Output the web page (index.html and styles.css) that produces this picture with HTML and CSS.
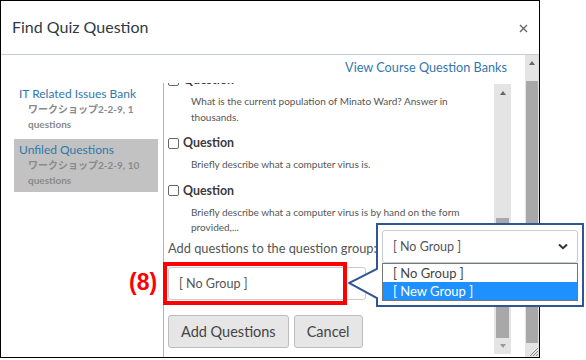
FILE: index.html
```html
<!DOCTYPE html>
<html lang="en">
<head>
    <meta charset="UTF-8">
    <meta name="viewport" content="width=device-width, initial-scale=1.0">
    <title>Find Quiz Question</title>
    <link rel="stylesheet" href="styles.css">
</head>
<body>
<div class="page">
    <div class="dialog">
        <div class="dialog-header">
            <h2 class="dialog-title">Find Quiz Question</h2>
            <button class="dialog-close" aria-label="Close">
                <svg width="9" height="9" viewBox="0 0 9 9"><path d="M1 1 L8 8 M8 1 L1 8" stroke="#666" stroke-width="1.4" fill="none"/></svg>
            </button>
        </div>

        <div class="dialog-body">
            <div class="dialog-main">
                <div class="bank-link-row">
                    <a href="#">View Course Question Banks</a>
                </div>

                <div class="finder">
                    <ul class="banks">
                        <li class="bank">
                            <a href="#" class="bank-name">IT Related Issues Bank</a>
                            <div class="bank-meta">ワークショップ2-2-9, 1 questions</div>
                        </li>
                        <li class="bank selected">
                            <a href="#" class="bank-name">Unfiled Questions</a>
                            <div class="bank-meta">ワークショップ2-2-9, 10 questions</div>
                        </li>
                    </ul>

                    <div class="questions-pane">
                        <div class="questions-scroll">
                            <div class="questions-list">
                                <div class="question">
                                    <label class="question-title"><span class="checkbox"></span>Question</label>
                                    <div class="question-text">What is the current population of Minato Ward? Answer in thousands.</div>
                                </div>
                                <div class="question">
                                    <label class="question-title"><span class="checkbox"></span>Question</label>
                                    <div class="question-text">Briefly describe what a computer virus is.</div>
                                </div>
                                <div class="question">
                                    <label class="question-title"><span class="checkbox"></span>Question</label>
                                    <div class="question-text">Briefly describe what a computer virus is by hand on the form provided,...</div>
                                </div>

                                <div class="group-label">Add questions to the question group:</div>
                                <div class="group-select">[ No Group ]</div>

                                <div class="actions">
                                    <button class="btn">Add Questions</button>
                                    <button class="btn">Cancel</button>
                                </div>
                            </div>
                        </div>

                        <div class="scrollbar inner-sb">
                            <div class="sb-button"><span class="arrow-up"></span></div>
                            <div class="sb-track"><div class="sb-thumb"></div></div>
                            <div class="sb-button bottom"><span class="arrow-down"></span></div>
                        </div>
                    </div>
                </div>
            </div>

            <div class="scrollbar outer-sb">
                <div class="sb-button tall"><span class="arrow-up"></span></div>
                <div class="sb-thumb"></div>
                <div class="sb-grip">
                    <svg width="12" height="12" viewBox="0 0 12 12"><path d="M11 3 L3 11 M11 6 L6 11 M11 9 L9 11" stroke="#8a8a8a" stroke-width="1" fill="none"/></svg>
                </div>
            </div>
        </div>
    </div>

    <!-- annotation -->
    <div class="step-label">(8)</div>
    <div class="highlight-box"></div>

    <div class="callout">
        <svg class="callout-frame" width="236" height="85" viewBox="0 0 236 85">
            <path d="M29 1 H235 V83 H29 V75 L1 60 L29 46 Z" fill="#fff" stroke="#2f5597" stroke-width="2"/>
        </svg>
        <div class="callout-body">
            <div class="select-box">
                <span>[ No Group ]</span>
                <svg width="10" height="7" viewBox="0 0 10 7"><path d="M1 1.5 L5 5.2 L9 1.5" stroke="#333" stroke-width="2" fill="none"/></svg>
            </div>
            <ul class="select-list">
                <li>[ No Group ]</li>
                <li class="active">[ New Group ]</li>
            </ul>
        </div>
    </div>
</div>
</body>
</html>
```

FILE: styles.css
```css
body {
    margin: 0;
    font-family: Lato, "Noto Sans CJK JP", sans-serif;
    background: #fff;
    color: #2d3b45;
}

.page {
    position: relative;
    width: 586px;
    height: 360px;
    overflow: hidden;
}

.dialog {
    width: 540px;
    height: 358px;
    box-sizing: border-box;
    border: 1px solid #000;
    display: flex;
    flex-direction: column;
}

.dialog-header {
    height: 54px;
    box-sizing: border-box;
    border-bottom: 1px solid #c7cdd1;
    display: flex;
    align-items: center;
    justify-content: space-between;
    padding: 0 11px 2px 11px;
}

.dialog-title {
    margin: 0;
    font-size: 16px;
    font-weight: normal;
    color: #2d3b45;
}

.dialog-close {
    border: none;
    background: none;
    padding: 0;
    margin-top: 4px;
    display: flex;
}

.dialog-body {
    flex: 1;
    display: flex;
    min-height: 0;
}

.dialog-main {
    flex: 1;
    display: flex;
    flex-direction: column;
}

.bank-link-row {
    height: 28px;
    line-height: 22px;
    text-align: right;
    padding-right: 18px;
}

.bank-link-row a {
    font-size: 12.7px;
    color: #3477ae;
    text-decoration: none;
}

.finder {
    flex: 1;
    display: flex;
    min-height: 0;
}

.banks {
    width: 162px;
    list-style: none;
    margin: 0;
    padding: 0;
}

.bank {
    height: 53px;
    box-sizing: border-box;
    margin: 0 5px 3px 13px;
    padding: 3px 0 4px 5px;
}

.bank.selected {
    background: #c2c2c2;
}

.bank-name {
    display: block;
    font-size: 12px;
    line-height: 16px;
    color: #2f78ad;
    text-decoration: none;
}

.bank-meta {
    margin-left: 9px;
    font-size: 10px;
    line-height: 15px;
    font-weight: bold;
    color: #8a8a8a;
}

.questions-pane {
    flex: 1;
    display: flex;
    border-left: 1px solid #b3b3b3;
    padding-right: 14px;
}

.questions-scroll {
    flex: 1;
    overflow: hidden;
    padding-left: 4px;
}

.questions-list {
    margin-top: -12px;
}

.question + .question {
    margin-top: 9px;
}

.question-title {
    display: flex;
    align-items: center;
    gap: 4px;
    font-size: 12.4px;
    line-height: 18px;
    font-weight: bold;
    color: #3b3b3b;
}

.checkbox {
    width: 9px;
    height: 9px;
    border: 1px solid #666;
    border-radius: 2px;
    background: #fff;
}

.question-text {
    width: 290px;
    margin: 5px 0 0 23px;
    font-size: 10px;
    line-height: 15.5px;
    color: #555;
}

.group-label {
    margin-top: 3px;
    font-size: 12.8px;
    line-height: 18px;
    color: #555;
}

.group-select {
    margin-top: 10px;
    width: 198px;
    height: 33px;
    box-sizing: border-box;
    border: 1px solid #c7cdd1;
    border-radius: 3px;
    padding-left: 10px;
    font-size: 12.6px;
    line-height: 31px;
    color: #555;
}

.actions {
    margin-top: 15px;
    display: flex;
    gap: 5px;
}

.btn {
    height: 33px;
    padding: 0 12px;
    font-family: Lato, sans-serif;
    font-size: 14.5px;
    color: #444;
    background: #e6e6e6;
    border: 1px solid #bdbdbd;
    border-radius: 3px;
}

/* scrollbars */
.scrollbar {
    background: #e4e4e4;
    display: flex;
    flex-direction: column;
}

.inner-sb {
    width: 17px;
    margin: 1px 0 3px;
}

.outer-sb {
    width: 14px;
}

.sb-button {
    height: 17px;
    display: flex;
    justify-content: center;
    align-items: center;
}

.sb-button.tall {
    height: 26px;
    align-items: flex-start;
    padding-top: 6px;
    box-sizing: border-box;
}

.sb-button.bottom {
    height: 16px;
}

.arrow-up {
    border-left: 3.5px solid transparent;
    border-right: 3.5px solid transparent;
    border-bottom: 4px solid #666;
}

.arrow-down {
    border-left: 3.5px solid transparent;
    border-right: 3.5px solid transparent;
    border-top: 4px solid #999;
}

.sb-track {
    flex: 1;
    display: flex;
    flex-direction: column;
    padding-top: 117px;
}

.sb-thumb {
    flex: 1;
    margin: 0 2px;
    background: #a8a8a8;
}

.outer-sb .sb-thumb {
    margin: 0 1px;
}

.sb-grip {
    height: 14px;
    display: flex;
    justify-content: flex-end;
    align-items: flex-end;
}

/* annotation overlay */
.step-label {
    position: absolute;
    left: 129px;
    top: 268px;
    font-family: "Liberation Sans", sans-serif;
    font-size: 23px;
    line-height: 28px;
    font-weight: bold;
    color: #ff0000;
}

.highlight-box {
    position: absolute;
    left: 163px;
    top: 262px;
    width: 176px;
    height: 35px;
    border: 4px solid #ff0000;
}

.callout {
    position: absolute;
    left: 348px;
    top: 223px;
    width: 236px;
    height: 85px;
}

.callout-frame {
    position: absolute;
    left: 0;
    top: 0;
}

.callout-body {
    position: absolute;
    left: 34px;
    top: 7px;
    width: 196px;
}

.select-box {
    height: 33px;
    box-sizing: border-box;
    border: 1px solid #c7cdd1;
    border-radius: 3px;
    padding: 0 9px 0 10px;
    display: flex;
    align-items: center;
    justify-content: space-between;
    font-size: 12.5px;
    color: #555;
    box-shadow: 0 1px 1px rgba(0, 0, 0, 0.08);
}

.select-list {
    list-style: none;
    margin: 0;
    padding: 0;
    border: 1px solid #767676;
    background: #fff;
}

.select-list li {
    height: 18px;
    line-height: 18px;
    padding-left: 10px;
    font-size: 13px;
    color: #444;
}

.select-list li.active {
    background: #1e90ff;
    color: #fff;
}
```
